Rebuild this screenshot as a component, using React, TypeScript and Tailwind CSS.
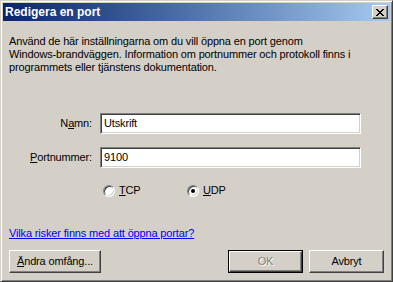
import React from "react";

const CloseGlyph = () => (
  <svg width="8" height="7" viewBox="0 0 8 7" shapeRendering="crispEdges">
    <path
      fill="#000"
      d="M0 0h2v1H0zM6 0h2v1H6zM1 1h2v1H1zM5 1h2v1H5zM2 2h4v1H2zM3 3h2v1H3zM2 4h4v1H2zM1 5h2v1H1zM5 5h2v1H5zM0 6h2v1H0zM6 6h2v1H6z"
    />
  </svg>
);

const Radio = ({ checked }: { checked?: boolean }) => (
  <div className="w-[12px] h-[12px] rounded-full bg-white border border-t-[#808080] border-l-[#808080] border-r-white border-b-white shadow-[inset_1px_1px_#404040,inset_-1px_-1px_#d4d0c8] flex items-center justify-center">
    {checked && <div className="w-[4px] h-[4px] rounded-full bg-black" />}
  </div>
);

const Field = ({ value }: { value: string }) => (
  <div className="w-[261px] h-[21px] bg-white border border-t-[#808080] border-l-[#808080] border-r-white border-b-white shadow-[inset_1px_1px_#404040,inset_-1px_-1px_#d4d0c8] flex items-center pl-[3px]">
    {value}
  </div>
);

const Btn = ({ children, className = "" }: { children: React.ReactNode; className?: string }) => (
  <div
    className={`h-[23px] flex items-center justify-center bg-[#d4d0c8] border border-t-white border-l-white border-r-[#404040] border-b-[#404040] shadow-[inset_-1px_-1px_#808080] ${className}`}
  >
    {children}
  </div>
);

export default function App() {
  return (
    <div className="w-[393px] h-[282px] bg-[#d4d0c8] p-[2px] border border-t-[#d4d0c8] border-l-[#d4d0c8] border-r-[#404040] border-b-[#404040] shadow-[inset_1px_1px_#ffffff,inset_-1px_-1px_#808080] font-['Liberation_Sans',Arial,sans-serif] text-[11px] text-black flex flex-col">
      {/* title bar */}
      <div className="h-[18px] bg-linear-to-r from-[#0a246a] to-[#a6caf0] flex items-center pl-[2px] pr-[2px]">
        <span className="text-white font-bold text-[12px] leading-none">Redigera en port</span>
        <div className="ml-auto w-[16px] h-[14px] bg-[#d4d0c8] border border-t-white border-l-white border-r-[#404040] border-b-[#404040] shadow-[inset_-1px_-1px_#808080] flex items-center justify-center">
          <CloseGlyph />
        </div>
      </div>

      <div className="flex flex-col px-[6px] tracking-[-0.15px]">
        <p className="mt-[14px] leading-[13px]">
          Använd de här inställningarna om du vill öppna en port genom
          <br />
          Windows-brandväggen. Information om portnummer och protokoll finns i
          <br />
          programmets eller tjänstens dokumentation.
        </p>

        <div className="mt-[39px] flex items-center">
          <span className="w-[83px] text-right">
            N<u>a</u>mn:
          </span>
          <div className="ml-[8px]">
            <Field value="Utskrift" />
          </div>
        </div>

        <div className="mt-[13px] flex items-center">
          <span className="w-[83px] text-right">
            <u>P</u>ortnummer:
          </span>
          <div className="ml-[8px]">
            <Field value="9100" />
          </div>
        </div>

        <div className="mt-[16px] ml-[94px] h-[13px] flex items-center">
          <div className="w-[84px] flex items-center gap-[4px]">
            <Radio />
            <span>
              <u>T</u>CP
            </span>
          </div>
          <div className="flex items-center gap-[4px]">
            <Radio checked />
            <span>
              <u>U</u>DP
            </span>
          </div>
        </div>

        <a className="mt-[30px] leading-[13px] text-[#0000ff] underline w-fit">
          Vilka risker finns med att öppna portar?
        </a>

        <div className="mt-[10px] flex">
          <Btn className="w-[92px]">
            <span>
              <u>Ä</u>ndra omfång...
            </span>
          </Btn>
          <div className="ml-auto w-[75px] h-[23px] border border-black">
            <Btn className="w-full h-full text-[#808080] [text-shadow:1px_1px_#ffffff]">OK</Btn>
          </div>
          <Btn className="ml-[6px] w-[75px]">Avbryt</Btn>
        </div>
      </div>
    </div>
  );
}
